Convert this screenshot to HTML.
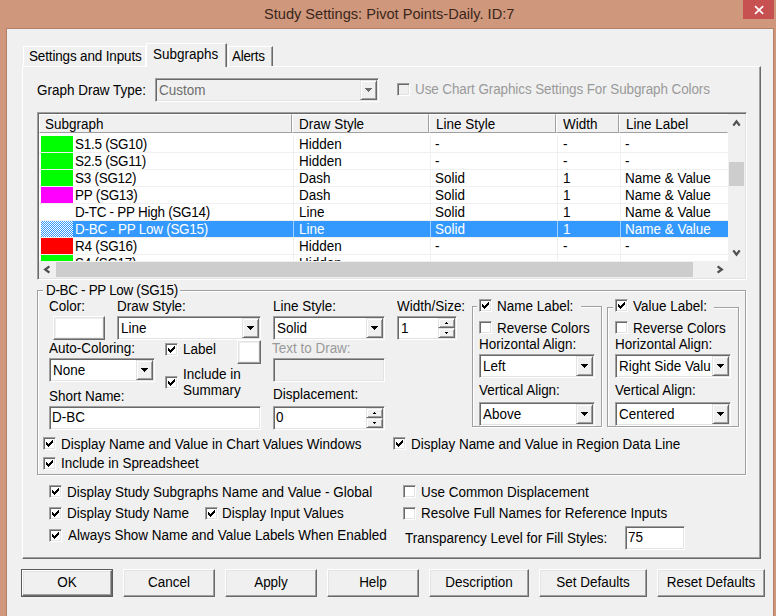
<!DOCTYPE html>
<html><head><meta charset="utf-8"><style>
*{margin:0;padding:0;box-sizing:border-box}
html,body{width:776px;height:616px;overflow:hidden;background:#cf977b;font-family:"Liberation Sans",sans-serif;font-size:14px;color:#000}
.a,.t,.sunk,.btn,.cb,.rbtn,.ln{position:absolute}
.t{white-space:nowrap;line-height:16px;height:16px;transform:scaleX(.962);transform-origin:0 0}
.tc{transform-origin:50% 0}
.sunk{border:1px solid;border-color:#a0a0a0 #fff #fff #a0a0a0;box-shadow:inset 1px 1px 0 #696969,inset -1px -1px 0 #e3e3e3;background:#fff}
.sunk.dis{background:#f0f0f0}
.sunk .t{position:absolute}
.btn{background:#f0f0f0;border:1px solid;border-color:#e3e3e3 #696969 #696969 #e3e3e3;box-shadow:inset 1px 1px 0 #fff,inset -1px -1px 0 #a0a0a0}
.rbtn{background:#f0f0f0;border:1px solid;border-color:#fff #696969 #696969 #fff;box-shadow:inset -1px -1px 0 #a0a0a0,inset 1px 1px 0 #e3e3e3}
.cb{border:1px solid;border-color:#a0a0a0 #fff #fff #a0a0a0;box-shadow:inset 1px 1px 0 #696969,inset -1px -1px 0 #e3e3e3;background:#fff}
.cb.dis{background:#f0f0f0}
.ln{background:#a0a0a0}
.grp{position:absolute;border:1px solid #a0a0a0;box-shadow:1px 1px 0 #fff,inset 1px 1px 0 #fff}
.gray{color:#9a9a9a}
</style></head><body>

<div class="a" style="left:6px;top:28px;width:768px;height:600px;background:#b58068"></div>
<div class="a" style="left:7px;top:29px;width:766px;height:600px;background:#f0f0f0"></div>
<div class="a" style="left:743px;top:0px;width:31px;height:19px;background:#c75050"></div>
<svg class="a" style="position:absolute;left:752px;top:4px" width="14" height="12"><path d="M3 2.2L11.2 9.8M11.2 2.2L3 9.8" stroke="#fff" stroke-width="1.7"/></svg>
<div class="t " style="left:264px;top:5.8px;color:#3a261c;font-size:14.6px;transform:none">Study Settings: Pivot Points-Daily. ID:7</div>
<div class="a" style="left:22px;top:66px;width:739px;height:493px;border-top:1px solid #fff;border-left:1px solid #fff;border-right:1px solid #696969;border-bottom:1px solid #696969;box-shadow:inset -1px -1px 0 #a0a0a0"></div>
<div class="a" style="left:23px;top:46px;width:123px;height:21px;border-top:1px solid #fff;border-left:1px solid #fff;border-right:1px solid #fff"></div>
<div class="t " style="left:29px;top:48.2px;letter-spacing:-0.15px">Settings and Inputs</div>
<div class="a" style="left:146px;top:43px;width:81px;height:24px;background:#f0f0f0;border-top:1px solid #fff;border-left:1px solid #fff;border-right:1px solid #696969;box-shadow:inset -1px 0 0 #a0a0a0"></div>
<div class="t " style="left:153px;top:46.2px;">Subgraphs</div>
<div class="a" style="left:228px;top:46px;width:45px;height:20px;border-top:1px solid #fff;border-left:1px solid #fff;border-right:1px solid #696969;box-shadow:inset -1px 0 0 #a0a0a0"></div>
<div class="t " style="left:231.5px;top:47.9px;letter-spacing:-0.3px">Alerts</div>
<div class="t " style="left:36.6px;top:81.5px;">Graph Draw Type:</div>
<div class="sunk dis" style="left:155px;top:78px;width:224px;height:24px;"><div class="t" style="left:3px;top:3.0px;color:#6d6d6d;overflow:hidden;width:208.9px">Custom</div><div class="btn" style="left:204px;top:1px;width:17px;height:20px"><svg width="7" height="4" style="position:absolute;left:4px;top:7px" shape-rendering="crispEdges"><path d="M0 0h7v1h-1v1h-1v1h-1v1h-1v-1h-1v-1h-1v-1h-1z" fill="#6d6d6d"/></svg></div></div>
<div class="cb dis" style="left:397px;top:83px;width:13px;height:13px;"></div>
<div class="t gray" style="left:414.6px;top:80.9px;letter-spacing:-0.1px">Use Chart Graphics Settings For Subgraph Colors</div>
<div class="a" style="left:37px;top:112px;width:710px;height:168px;border:1px solid;border-color:#a0a0a0 #fff #fff #a0a0a0;box-shadow:inset 1px 1px 0 #696969,inset -1px -1px 0 #e3e3e3;background:#fff"></div>
<div class="a" style="left:39px;top:114px;width:253px;height:19px;background:#f0f0f0;border-left:1px solid #fff;border-top:1px solid #fff;border-right:1px solid #a0a0a0;border-bottom:1px solid #a0a0a0"></div>
<div class="t " style="left:45px;top:116.0px;">Subgraph</div>
<div class="a" style="left:292px;top:114px;width:137px;height:19px;background:#f0f0f0;border-left:1px solid #fff;border-top:1px solid #fff;border-right:1px solid #a0a0a0;border-bottom:1px solid #a0a0a0"></div>
<div class="t " style="left:299px;top:116.0px;">Draw Style</div>
<div class="a" style="left:429px;top:114px;width:127px;height:19px;background:#f0f0f0;border-left:1px solid #fff;border-top:1px solid #fff;border-right:1px solid #a0a0a0;border-bottom:1px solid #a0a0a0"></div>
<div class="t " style="left:436px;top:116.0px;">Line Style</div>
<div class="a" style="left:556px;top:114px;width:63px;height:19px;background:#f0f0f0;border-left:1px solid #fff;border-top:1px solid #fff;border-right:1px solid #a0a0a0;border-bottom:1px solid #a0a0a0"></div>
<div class="t " style="left:563px;top:116.0px;">Width</div>
<div class="a" style="left:619px;top:114px;width:109px;height:19px;background:#f0f0f0;border-left:1px solid #fff;border-top:1px solid #fff;border-right:1px solid #f0f0f0;border-bottom:1px solid #a0a0a0"></div>
<div class="t " style="left:626px;top:116.0px;">Line Label</div>
<div class="a" style="left:39px;top:133px;width:689px;height:128px;overflow:hidden">
<div class="a" style="left:0;top:19px;width:689px;height:1px;background:#f0f0f0"></div>
<div class="a" style="left:254px;top:3px;width:1px;height:16px;background:#f0f0f0"></div>
<div class="a" style="left:391px;top:3px;width:1px;height:16px;background:#f0f0f0"></div>
<div class="a" style="left:518px;top:3px;width:1px;height:16px;background:#f0f0f0"></div>
<div class="a" style="left:581px;top:3px;width:1px;height:16px;background:#f0f0f0"></div>
<div class="a" style="left:2px;top:3px;width:32px;height:16px;background:#00ff00"></div>
<div class="t" style="left:36px;top:3.0px;color:#000;letter-spacing:-0.27px">S1.5 (SG10)</div>
<div class="t" style="left:259.5px;top:3.0px;color:#000">Hidden</div>
<div class="t" style="left:396px;top:3.0px;color:#000">-</div>
<div class="t" style="left:523.5px;top:3.0px;color:#000">-</div>
<div class="t" style="left:586px;top:3.0px;color:#000">-</div>
<div class="a" style="left:0;top:36px;width:689px;height:1px;background:#f0f0f0"></div>
<div class="a" style="left:254px;top:20px;width:1px;height:16px;background:#f0f0f0"></div>
<div class="a" style="left:391px;top:20px;width:1px;height:16px;background:#f0f0f0"></div>
<div class="a" style="left:518px;top:20px;width:1px;height:16px;background:#f0f0f0"></div>
<div class="a" style="left:581px;top:20px;width:1px;height:16px;background:#f0f0f0"></div>
<div class="a" style="left:2px;top:20px;width:32px;height:16px;background:#00ff00"></div>
<div class="t" style="left:36px;top:20.0px;color:#000;letter-spacing:-0.27px">S2.5 (SG11)</div>
<div class="t" style="left:259.5px;top:20.0px;color:#000">Hidden</div>
<div class="t" style="left:396px;top:20.0px;color:#000">-</div>
<div class="t" style="left:523.5px;top:20.0px;color:#000">-</div>
<div class="t" style="left:586px;top:20.0px;color:#000">-</div>
<div class="a" style="left:0;top:53px;width:689px;height:1px;background:#f0f0f0"></div>
<div class="a" style="left:254px;top:37px;width:1px;height:16px;background:#f0f0f0"></div>
<div class="a" style="left:391px;top:37px;width:1px;height:16px;background:#f0f0f0"></div>
<div class="a" style="left:518px;top:37px;width:1px;height:16px;background:#f0f0f0"></div>
<div class="a" style="left:581px;top:37px;width:1px;height:16px;background:#f0f0f0"></div>
<div class="a" style="left:2px;top:37px;width:32px;height:16px;background:#00ff00"></div>
<div class="t" style="left:36px;top:37.0px;color:#000;letter-spacing:-0.27px">S3 (SG12)</div>
<div class="t" style="left:259.5px;top:37.0px;color:#000">Dash</div>
<div class="t" style="left:396px;top:37.0px;color:#000">Solid</div>
<div class="t" style="left:523.5px;top:37.0px;color:#000">1</div>
<div class="t" style="left:586px;top:37.0px;color:#000">Name &amp; Value</div>
<div class="a" style="left:0;top:70px;width:689px;height:1px;background:#f0f0f0"></div>
<div class="a" style="left:254px;top:54px;width:1px;height:16px;background:#f0f0f0"></div>
<div class="a" style="left:391px;top:54px;width:1px;height:16px;background:#f0f0f0"></div>
<div class="a" style="left:518px;top:54px;width:1px;height:16px;background:#f0f0f0"></div>
<div class="a" style="left:581px;top:54px;width:1px;height:16px;background:#f0f0f0"></div>
<div class="a" style="left:2px;top:54px;width:32px;height:16px;background:#ff00ff"></div>
<div class="t" style="left:36px;top:54.0px;color:#000;letter-spacing:-0.27px">PP (SG13)</div>
<div class="t" style="left:259.5px;top:54.0px;color:#000">Dash</div>
<div class="t" style="left:396px;top:54.0px;color:#000">Solid</div>
<div class="t" style="left:523.5px;top:54.0px;color:#000">1</div>
<div class="t" style="left:586px;top:54.0px;color:#000">Name &amp; Value</div>
<div class="a" style="left:0;top:87px;width:689px;height:1px;background:#f0f0f0"></div>
<div class="a" style="left:254px;top:71px;width:1px;height:16px;background:#f0f0f0"></div>
<div class="a" style="left:391px;top:71px;width:1px;height:16px;background:#f0f0f0"></div>
<div class="a" style="left:518px;top:71px;width:1px;height:16px;background:#f0f0f0"></div>
<div class="a" style="left:581px;top:71px;width:1px;height:16px;background:#f0f0f0"></div>
<div class="t" style="left:36px;top:71.0px;color:#000;letter-spacing:-0.27px">D-TC - PP High (SG14)</div>
<div class="t" style="left:259.5px;top:71.0px;color:#000">Line</div>
<div class="t" style="left:396px;top:71.0px;color:#000">Solid</div>
<div class="t" style="left:523.5px;top:71.0px;color:#000">1</div>
<div class="t" style="left:586px;top:71.0px;color:#000">Name &amp; Value</div>
<div class="a" style="left:0;top:104px;width:689px;height:1px;background:#f0f0f0"></div>
<div class="a" style="left:34px;top:88px;width:655px;height:16px;background:#3399ff"></div>
<div class="a" style="left:254px;top:88px;width:1px;height:16px;background:#9fd0ff"></div>
<div class="a" style="left:391px;top:88px;width:1px;height:16px;background:#9fd0ff"></div>
<div class="a" style="left:518px;top:88px;width:1px;height:16px;background:#9fd0ff"></div>
<div class="a" style="left:581px;top:88px;width:1px;height:16px;background:#9fd0ff"></div>
<div class="a" style="left:2px;top:88px;width:32px;height:16px;background-color:#fff;background-image:linear-gradient(45deg,#3399ff 25%,transparent 25%,transparent 75%,#3399ff 75%),linear-gradient(45deg,#3399ff 25%,transparent 25%,transparent 75%,#3399ff 75%);background-size:2px 2px;background-position:0 0,1px 1px"></div>
<div class="t" style="left:36px;top:88.0px;color:#fff;letter-spacing:-0.27px">D-BC - PP Low (SG15)</div>
<div class="t" style="left:259.5px;top:88.0px;color:#fff">Line</div>
<div class="t" style="left:396px;top:88.0px;color:#fff">Solid</div>
<div class="t" style="left:523.5px;top:88.0px;color:#fff">1</div>
<div class="t" style="left:586px;top:88.0px;color:#fff">Name &amp; Value</div>
<div class="a" style="left:0;top:121px;width:689px;height:1px;background:#f0f0f0"></div>
<div class="a" style="left:254px;top:105px;width:1px;height:16px;background:#f0f0f0"></div>
<div class="a" style="left:391px;top:105px;width:1px;height:16px;background:#f0f0f0"></div>
<div class="a" style="left:518px;top:105px;width:1px;height:16px;background:#f0f0f0"></div>
<div class="a" style="left:581px;top:105px;width:1px;height:16px;background:#f0f0f0"></div>
<div class="a" style="left:2px;top:105px;width:32px;height:16px;background:#ff0000"></div>
<div class="t" style="left:36px;top:105.0px;color:#000;letter-spacing:-0.27px">R4 (SG16)</div>
<div class="t" style="left:259.5px;top:105.0px;color:#000">Hidden</div>
<div class="t" style="left:396px;top:105.0px;color:#000">-</div>
<div class="t" style="left:523.5px;top:105.0px;color:#000">-</div>
<div class="t" style="left:586px;top:105.0px;color:#000">-</div>
<div class="a" style="left:0;top:138px;width:689px;height:1px;background:#f0f0f0"></div>
<div class="a" style="left:254px;top:122px;width:1px;height:16px;background:#f0f0f0"></div>
<div class="a" style="left:391px;top:122px;width:1px;height:16px;background:#f0f0f0"></div>
<div class="a" style="left:518px;top:122px;width:1px;height:16px;background:#f0f0f0"></div>
<div class="a" style="left:581px;top:122px;width:1px;height:16px;background:#f0f0f0"></div>
<div class="a" style="left:2px;top:122px;width:32px;height:16px;background:#00ff00"></div>
<div class="t" style="left:36px;top:122.0px;color:#000;letter-spacing:-0.27px">S4 (SG17)</div>
<div class="t" style="left:259.5px;top:122.0px;color:#000">Hidden</div>
<div class="t" style="left:396px;top:122.0px;color:#000">-</div>
<div class="t" style="left:523.5px;top:122.0px;color:#000">-</div>
<div class="t" style="left:586px;top:122.0px;color:#000">-</div>
</div>
<div class="a" style="left:728px;top:114px;width:17px;height:164px;background:#f0f0f0"></div>
<div class="a" style="left:729px;top:162px;width:15px;height:24px;background:#cdcdcd"></div>
<div class="a" style="left:39px;top:261px;width:689px;height:17px;background:#f0f0f0"></div>
<div class="a" style="left:56px;top:262px;width:637px;height:15px;background:#cdcdcd"></div>
<svg style="position:absolute;left:0;top:0" width="776" height="616"><path d="M733.3 125.6L736.5 121.4L739.7 125.6" stroke="#505050" stroke-width="2.3" fill="none" stroke-linejoin="miter"/><path d="M733.3 250.4L736.5 254.6L739.7 250.4" stroke="#505050" stroke-width="2.3" fill="none"/><path d="M49.4 266.3L45.2 269.5L49.4 272.7" stroke="#505050" stroke-width="2.3" fill="none"/><path d="M717.6 266.3L721.8 269.5L717.6 272.7" stroke="#505050" stroke-width="2.3" fill="none"/></svg>
<div class="a" style="left:37px;top:290px;width:709px;height:185px;border:1px solid #a0a0a0;border-right-color:#a0a0a0;box-shadow:inset 1px 1px 0 #fff, 1px 1px 0 #fff"></div>
<div class="a" style="left:43px;top:284px;width:137px;height:14px;background:#f0f0f0"></div>
<div class="t " style="left:46.1px;top:281.9px;letter-spacing:-0.33px">D-BC - PP Low (SG15)</div>
<div class="t " style="left:49.3px;top:298.1px;">Color:</div>
<div class="rbtn" style="left:53px;top:316px;width:52px;height:24px"><div class="a" style="left:2px;top:2px;right:2px;bottom:2px;background:#fff"></div></div>
<div class="t " style="left:116.5px;top:298.1px;">Draw Style:</div>
<div class="sunk" style="left:117px;top:316px;width:144px;height:24px;"><div class="t" style="left:3px;top:3.3px;overflow:hidden;width:125.8px">Line</div><div class="btn" style="left:124px;top:1px;width:17px;height:20px"><svg width="7" height="4" style="position:absolute;left:4px;top:7px" shape-rendering="crispEdges"><path d="M0 0h7v1h-1v1h-1v1h-1v1h-1v-1h-1v-1h-1v-1h-1z" fill="#000"/></svg></div></div>
<div class="t " style="left:273px;top:297.6px;">Line Style:</div>
<div class="sunk" style="left:273px;top:316px;width:112px;height:24px;"><div class="t" style="left:3px;top:3.3px;overflow:hidden;width:92.5px">Solid</div><div class="btn" style="left:92px;top:1px;width:17px;height:20px"><svg width="7" height="4" style="position:absolute;left:4px;top:7px" shape-rendering="crispEdges"><path d="M0 0h7v1h-1v1h-1v1h-1v1h-1v-1h-1v-1h-1v-1h-1z" fill="#000"/></svg></div></div>
<div class="t " style="left:397px;top:297.8px;">Width/Size:</div>
<div class="sunk" style="left:397px;top:316px;width:60px;height:24px;"><div class="t" style="left:3px;top:2.8px">1</div><div class="btn" style="left:40px;top:1px;width:17px;height:10px"><svg width="3" height="2" style="position:absolute;left:6px;top:3px" shape-rendering="crispEdges"><path d="M1 0h1v1h1v1h-3v-1h1z" fill="#000"/></svg></div><div class="btn" style="left:40px;top:11px;width:17px;height:10px"><svg width="3" height="2" style="position:absolute;left:6px;top:3px" shape-rendering="crispEdges"><path d="M0 0h3v1h-1v1h-1v-1h-1z" fill="#000"/></svg></div></div>
<div class="a" style="left:472px;top:306px;width:130px;height:121px;border:1px solid #a0a0a0;border-right-color:#a0a0a0;box-shadow:inset 1px 1px 0 #fff, 1px 1px 0 #fff"></div>
<div class="a" style="left:477px;top:298px;width:104px;height:16px;background:#f0f0f0"></div>
<div class="cb" style="left:479px;top:299px;width:13px;height:13px;"><svg width="7" height="7" style="position:absolute;left:2px;top:2px" shape-rendering="crispEdges"><path d="M6 0h1v3h-1zM5 1h1v3h-1zM4 2h1v3h-1zM0 2h1v3h-1zM1 3h1v3h-1zM2 4h1v3h-1zM3 3h1v3h-1z" fill="#000"/></svg></div>
<div class="t " style="left:496.7px;top:297.8px;">Name Label:</div>
<div class="cb" style="left:479px;top:321px;width:13px;height:13px;"></div>
<div class="t " style="left:496.7px;top:319.8px;">Reverse Colors</div>
<div class="t " style="left:479.1px;top:336.4px;">Horizontal Align:</div>
<div class="sunk" style="left:479px;top:354px;width:116px;height:24px;"><div class="t" style="left:3px;top:2.8px;overflow:hidden;width:96.7px">Left</div><div class="btn" style="left:96px;top:1px;width:17px;height:20px"><svg width="7" height="4" style="position:absolute;left:4px;top:7px" shape-rendering="crispEdges"><path d="M0 0h7v1h-1v1h-1v1h-1v1h-1v-1h-1v-1h-1v-1h-1z" fill="#000"/></svg></div></div>
<div class="t " style="left:479.1px;top:381.6px;">Vertical Align:</div>
<div class="sunk" style="left:479px;top:402px;width:116px;height:24px;"><div class="t" style="left:3px;top:3.3px;overflow:hidden;width:96.7px">Above</div><div class="btn" style="left:96px;top:1px;width:17px;height:20px"><svg width="7" height="4" style="position:absolute;left:4px;top:7px" shape-rendering="crispEdges"><path d="M0 0h7v1h-1v1h-1v1h-1v1h-1v-1h-1v-1h-1v-1h-1z" fill="#000"/></svg></div></div>
<div class="a" style="left:607px;top:307px;width:132px;height:120px;border:1px solid #a0a0a0;border-right-color:#a0a0a0;box-shadow:inset 1px 1px 0 #fff, 1px 1px 0 #fff"></div>
<div class="a" style="left:613px;top:298px;width:101px;height:16px;background:#f0f0f0"></div>
<div class="cb" style="left:615px;top:299px;width:13px;height:13px;"><svg width="7" height="7" style="position:absolute;left:2px;top:2px" shape-rendering="crispEdges"><path d="M6 0h1v3h-1zM5 1h1v3h-1zM4 2h1v3h-1zM0 2h1v3h-1zM1 3h1v3h-1zM2 4h1v3h-1zM3 3h1v3h-1z" fill="#000"/></svg></div>
<div class="t " style="left:632.8px;top:297.8px;">Value Label:</div>
<div class="cb" style="left:615px;top:321px;width:13px;height:13px;"></div>
<div class="t " style="left:632.8px;top:319.8px;">Reverse Colors</div>
<div class="t " style="left:615.1px;top:336.4px;">Horizontal Align:</div>
<div class="sunk" style="left:615px;top:354px;width:116px;height:24px;"><div class="t" style="left:3px;top:2.8px;overflow:hidden;width:96.7px">Right Side Valu</div><div class="btn" style="left:96px;top:1px;width:17px;height:20px"><svg width="7" height="4" style="position:absolute;left:4px;top:7px" shape-rendering="crispEdges"><path d="M0 0h7v1h-1v1h-1v1h-1v1h-1v-1h-1v-1h-1v-1h-1z" fill="#000"/></svg></div></div>
<div class="t " style="left:615.1px;top:381.6px;">Vertical Align:</div>
<div class="sunk" style="left:615px;top:402px;width:116px;height:24px;"><div class="t" style="left:3px;top:3.3px;overflow:hidden;width:96.7px">Centered</div><div class="btn" style="left:96px;top:1px;width:17px;height:20px"><svg width="7" height="4" style="position:absolute;left:4px;top:7px" shape-rendering="crispEdges"><path d="M0 0h7v1h-1v1h-1v1h-1v1h-1v-1h-1v-1h-1v-1h-1z" fill="#000"/></svg></div></div>
<div class="t " style="left:48.9px;top:339.5px;">Auto-Coloring:</div>
<div class="sunk" style="left:49px;top:358px;width:106px;height:24px;"><div class="t" style="left:3px;top:3.0px;overflow:hidden;width:86.3px">None</div><div class="btn" style="left:86px;top:1px;width:17px;height:20px"><svg width="7" height="4" style="position:absolute;left:4px;top:7px" shape-rendering="crispEdges"><path d="M0 0h7v1h-1v1h-1v1h-1v1h-1v-1h-1v-1h-1v-1h-1z" fill="#000"/></svg></div></div>
<div class="cb" style="left:165px;top:343px;width:13px;height:13px;"><svg width="7" height="7" style="position:absolute;left:2px;top:2px" shape-rendering="crispEdges"><path d="M6 0h1v3h-1zM5 1h1v3h-1zM4 2h1v3h-1zM0 2h1v3h-1zM1 3h1v3h-1zM2 4h1v3h-1zM3 3h1v3h-1z" fill="#000"/></svg></div>
<div class="t " style="left:182.5px;top:340.5px;">Label</div>
<div class="rbtn" style="left:237px;top:340px;width:24px;height:24px"><div class="a" style="left:2px;top:2px;right:2px;bottom:2px;background:#fff"></div></div>
<div class="cb" style="left:165px;top:376px;width:13px;height:13px;"><svg width="7" height="7" style="position:absolute;left:2px;top:2px" shape-rendering="crispEdges"><path d="M6 0h1v3h-1zM5 1h1v3h-1zM4 2h1v3h-1zM0 2h1v3h-1zM1 3h1v3h-1zM2 4h1v3h-1zM3 3h1v3h-1z" fill="#000"/></svg></div>
<div class="t " style="left:182.5px;top:366.0px;">Include in</div>
<div class="t " style="left:182.5px;top:382.4px;">Summary</div>
<div class="t " style="left:48.7px;top:387.9px;">Short Name:</div>
<div class="sunk" style="left:49px;top:406px;width:212px;height:24px;"><div class="t" style="left:2px;top:1.5px">D-BC</div></div>
<div class="t gray" style="left:272.2px;top:339.8px;">Text to Draw:</div>
<div class="sunk dis" style="left:273px;top:358px;width:112px;height:24px;"></div>
<div class="t " style="left:272.9px;top:386.1px;">Displacement:</div>
<div class="sunk" style="left:273px;top:406px;width:112px;height:24px;"><div class="t" style="left:2px;top:1.7px">0</div><div class="btn" style="left:92px;top:1px;width:17px;height:10px"><svg width="3" height="2" style="position:absolute;left:6px;top:3px" shape-rendering="crispEdges"><path d="M1 0h1v1h1v1h-3v-1h1z" fill="#000"/></svg></div><div class="btn" style="left:92px;top:11px;width:17px;height:10px"><svg width="3" height="2" style="position:absolute;left:6px;top:3px" shape-rendering="crispEdges"><path d="M0 0h3v1h-1v1h-1v-1h-1z" fill="#000"/></svg></div></div>
<div class="cb" style="left:43px;top:437px;width:13px;height:13px;"><svg width="7" height="7" style="position:absolute;left:2px;top:2px" shape-rendering="crispEdges"><path d="M6 0h1v3h-1zM5 1h1v3h-1zM4 2h1v3h-1zM0 2h1v3h-1zM1 3h1v3h-1zM2 4h1v3h-1zM3 3h1v3h-1z" fill="#000"/></svg></div>
<div class="t " style="left:60.8px;top:436.3px;">Display Name and Value in Chart Values Windows</div>
<div class="cb" style="left:43px;top:457px;width:13px;height:13px;"><svg width="7" height="7" style="position:absolute;left:2px;top:2px" shape-rendering="crispEdges"><path d="M6 0h1v3h-1zM5 1h1v3h-1zM4 2h1v3h-1zM0 2h1v3h-1zM1 3h1v3h-1zM2 4h1v3h-1zM3 3h1v3h-1z" fill="#000"/></svg></div>
<div class="t " style="left:60.8px;top:454.9px;">Include in Spreadsheet</div>
<div class="cb" style="left:393px;top:437px;width:13px;height:13px;"><svg width="7" height="7" style="position:absolute;left:2px;top:2px" shape-rendering="crispEdges"><path d="M6 0h1v3h-1zM5 1h1v3h-1zM4 2h1v3h-1zM0 2h1v3h-1zM1 3h1v3h-1zM2 4h1v3h-1zM3 3h1v3h-1z" fill="#000"/></svg></div>
<div class="t " style="left:411.3px;top:435.8px;">Display Name and Value in Region Data Line</div>
<div class="cb" style="left:49px;top:485px;width:13px;height:13px;"><svg width="7" height="7" style="position:absolute;left:2px;top:2px" shape-rendering="crispEdges"><path d="M6 0h1v3h-1zM5 1h1v3h-1zM4 2h1v3h-1zM0 2h1v3h-1zM1 3h1v3h-1zM2 4h1v3h-1zM3 3h1v3h-1z" fill="#000"/></svg></div>
<div class="t " style="left:66.6px;top:483.8px;">Display Study Subgraphs Name and Value - Global</div>
<div class="cb" style="left:49px;top:507px;width:13px;height:13px;"><svg width="7" height="7" style="position:absolute;left:2px;top:2px" shape-rendering="crispEdges"><path d="M6 0h1v3h-1zM5 1h1v3h-1zM4 2h1v3h-1zM0 2h1v3h-1zM1 3h1v3h-1zM2 4h1v3h-1zM3 3h1v3h-1z" fill="#000"/></svg></div>
<div class="t " style="left:66.6px;top:505.1px;">Display Study Name</div>
<div class="cb" style="left:205px;top:507px;width:13px;height:13px;"><svg width="7" height="7" style="position:absolute;left:2px;top:2px" shape-rendering="crispEdges"><path d="M6 0h1v3h-1zM5 1h1v3h-1zM4 2h1v3h-1zM0 2h1v3h-1zM1 3h1v3h-1zM2 4h1v3h-1zM3 3h1v3h-1z" fill="#000"/></svg></div>
<div class="t " style="left:222.2px;top:505.1px;">Display Input Values</div>
<div class="cb" style="left:49px;top:529px;width:13px;height:13px;"><svg width="7" height="7" style="position:absolute;left:2px;top:2px" shape-rendering="crispEdges"><path d="M6 0h1v3h-1zM5 1h1v3h-1zM4 2h1v3h-1zM0 2h1v3h-1zM1 3h1v3h-1zM2 4h1v3h-1zM3 3h1v3h-1z" fill="#000"/></svg></div>
<div class="t " style="left:67.5px;top:527.0px;">Always Show Name and Value Labels When Enabled</div>
<div class="cb" style="left:403px;top:485px;width:13px;height:13px;"></div>
<div class="t " style="left:421.3px;top:483.8px;">Use Common Displacement</div>
<div class="cb" style="left:403px;top:507px;width:13px;height:13px;"></div>
<div class="t " style="left:421.3px;top:505.1px;">Resolve Full Names for Reference Inputs</div>
<div class="t " style="left:405.1px;top:530.1px;">Transparency Level for Fill Styles:</div>
<div class="sunk" style="left:625px;top:526px;width:60px;height:24px;"><div class="t" style="left:2px;top:1.5px">75</div></div>
<div class="a" style="left:21px;top:569px;width:92px;height:28px;border:1px solid #5a5a5a;"><div class="rbtn" style="left:0;top:0;width:90px;height:26px"></div></div>
<div class="t tc" style="left:21px;top:573.5px;width:92px;text-align:center">OK</div>
<div class="rbtn" style="left:123px;top:569px;width:92px;height:28px"></div>
<div class="t tc" style="left:123px;top:573.5px;width:92px;text-align:center">Cancel</div>
<div class="rbtn" style="left:225px;top:569px;width:92px;height:28px"></div>
<div class="t tc" style="left:225px;top:573.5px;width:92px;text-align:center">Apply</div>
<div class="rbtn" style="left:327px;top:569px;width:92px;height:28px"></div>
<div class="t tc" style="left:327px;top:573.5px;width:92px;text-align:center">Help</div>
<div class="rbtn" style="left:429px;top:569px;width:100px;height:28px"></div>
<div class="t tc" style="left:429px;top:573.5px;width:100px;text-align:center">Description</div>
<div class="rbtn" style="left:539px;top:569px;width:108px;height:28px"></div>
<div class="t tc" style="left:539px;top:573.5px;width:108px;text-align:center">Set Defaults</div>
<div class="rbtn" style="left:657px;top:569px;width:108px;height:28px"></div>
<div class="t tc" style="left:657px;top:573.5px;width:108px;text-align:center">Reset Defaults</div>
</body></html>
